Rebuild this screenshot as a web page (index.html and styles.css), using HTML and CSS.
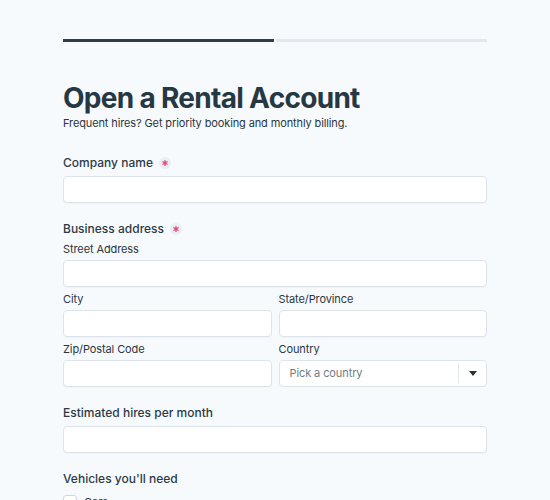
FILE: index.html
```html
<!DOCTYPE html>
<html lang="en">

<head>
<meta charset="UTF-8" />
<title>Open a Rental Account</title>
<link rel="stylesheet" href="styles.css">
</head>
<body>

  <div class="form-wrap">

    <div class="progress">
      <div class="step done"></div>
      <div class="step"></div>
    </div>

    <h1>Open a Rental Account</h1>
    <p class="lead">Frequent hires? Get priority booking and monthly billing.</p>

    <div class="field">
      <label class="label" for="company">Company name
        <svg class="req" width="12" height="12" viewBox="0 0 12 12" aria-label="required">
          <circle cx="6" cy="6" r="6" fill="#eaeef2"/>
          <path d="M6 3.6V8.4M3.9 4.8L8.1 7.2M3.9 7.2L8.1 4.8" stroke="#e6457c" stroke-width="1.3" stroke-linecap="round"/>
        </svg>
      </label>
      <input class="input" id="company" type="text">
    </div>

    <div class="field">
      <div class="label group-label">Business address
        <svg class="req" width="12" height="12" viewBox="0 0 12 12" aria-label="required">
          <circle cx="6" cy="6" r="6" fill="#eaeef2"/>
          <path d="M6 3.6V8.4M3.9 4.8L8.1 7.2M3.9 7.2L8.1 4.8" stroke="#e6457c" stroke-width="1.3" stroke-linecap="round"/>
        </svg>
      </div>
      <div class="address">
        <div class="sub wide">
          <label class="sub-label" for="street">Street Address</label>
          <input class="input" id="street" type="text">
        </div>
        <div class="sub">
          <label class="sub-label" for="city">City</label>
          <input class="input" id="city" type="text">
        </div>
        <div class="sub">
          <label class="sub-label" for="state">State/Province</label>
          <input class="input" id="state" type="text">
        </div>
        <div class="sub">
          <label class="sub-label" for="zip">Zip/Postal Code</label>
          <input class="input" id="zip" type="text">
        </div>
        <div class="sub">
          <label class="sub-label" for="country">Country</label>
          <div class="select" id="country">
            <span class="placeholder">Pick a country</span>
            <span class="select-sep"></span>
            <span class="caret"></span>
          </div>
        </div>
      </div>
    </div>

    <div class="field">
      <label class="label" for="hires">Estimated hires per month</label>
      <input class="input" id="hires" type="text">
    </div>

    <div class="field">
      <div class="label">Vehicles you'll need</div>
      <div class="checks">
        <label class="check"><span class="box"></span>Cars</label>
        <label class="check"><span class="box"></span>Vans</label>
        <label class="check"><span class="box"></span>Trucks</label>
      </div>
    </div>

  </div>

</body>
</html>
```

FILE: styles.css
```css
body {
  margin: 0;
  background-color: #f7fafd;
  font-family: Inter, "Noto Sans", sans-serif;
  color: #2c3a45;
}

.form-wrap {
  width: 424px;
  margin: 0 auto;
  padding: 39px 0 40px;
}

.progress {
  display: flex;
  gap: 2px;
}

.step {
  flex: 1;
  height: 3px;
  background: #e3e8ee;
}

.step.done {
  background: #2f3e49;
}

h1 {
  margin: 39px 0 0;
  font-size: 28px;
  line-height: 34px;
  font-weight: 700;
  color: #263843;
  letter-spacing: -0.7px;
}

.lead {
  margin: 0;
  font-size: 11px;
  line-height: 16px;
  letter-spacing: -0.12px;
  color: #2a3640;
}

.field {
  margin-top: 23px;
}

.field + .field {
  margin-top: 17px;
}

.label {
  display: block;
  font-size: 12px;
  line-height: 18px;
  font-weight: 500;
  margin-bottom: 4px;
}

.group-label {
  margin-bottom: 2.5px;
}

.req {
  margin-left: 3px;
  vertical-align: -2px;
}

.input {
  display: block;
  box-sizing: border-box;
  width: 100%;
  height: 27px;
  margin: 0;
  border: 1px solid #dde3ea;
  border-radius: 4px;
  background: #fff;
  font: inherit;
  font-size: 11px;
  padding: 0 10px;
  box-shadow: 0 1px 1px rgba(30, 50, 70, 0.03);
}

.address {
  display: grid;
  grid-template-columns: 1fr 1fr;
  column-gap: 7px;
  row-gap: 4px;
}

.sub.wide {
  grid-column: 1 / 3;
}

.sub-label {
  display: block;
  font-size: 11px;
  line-height: 16px;
  letter-spacing: -0.1px;
  margin-bottom: 3px;
  color: #2a3640;
}

.select {
  display: flex;
  align-items: center;
  box-sizing: border-box;
  height: 27px;
  border: 1px solid #dde3ea;
  border-radius: 4px;
  background: #fff;
  padding-left: 10px;
}

.placeholder {
  flex: 1;
  font-size: 11px;
  letter-spacing: -0.1px;
  color: #737b84;
}

.select-sep {
  width: 1px;
  height: 19px;
  background: #e1e6ec;
}

.caret {
  width: 0;
  height: 0;
  margin: 0 9px 0 10px;
  border-left: 4px solid transparent;
  border-right: 4px solid transparent;
  border-top: 5px solid #26323c;
}

.checks {
  display: flex;
  flex-direction: column;
  gap: 8px;
  margin-top: 7px;
}

.check {
  display: flex;
  align-items: center;
  gap: 7px;
  font-size: 11px;
  line-height: 15px;
}

.box {
  width: 14px;
  height: 14px;
  box-sizing: border-box;
  border: 1px solid #cfd6de;
  border-radius: 3px;
  background: #fff;
}
```
